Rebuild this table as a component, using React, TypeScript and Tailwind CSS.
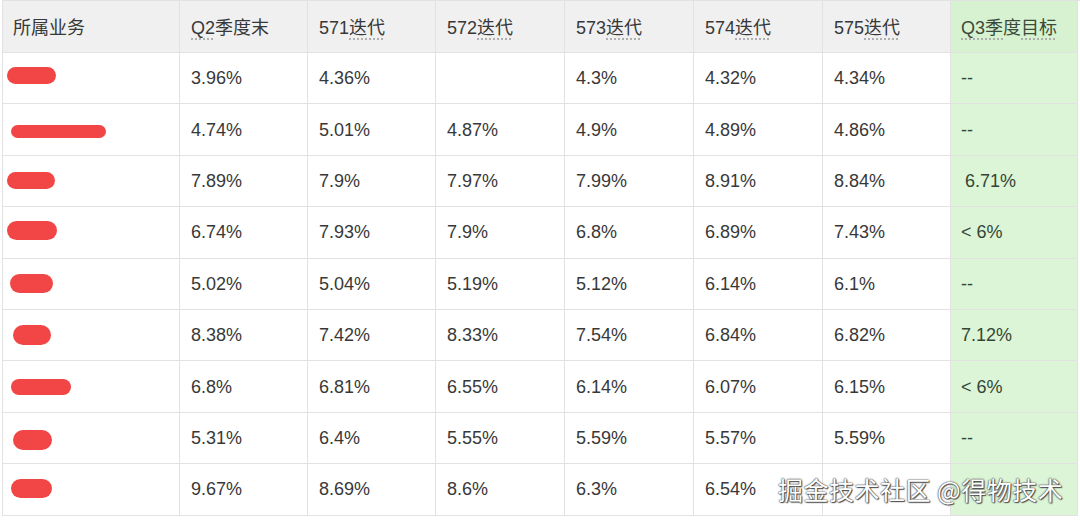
const columns = ["Q2季度末", "571迭代", "572迭代", "573迭代", "574迭代", "575迭代"];

const rows = [
  { pill: "ml-[4px] w-[49px] h-[17px] -translate-y-[3px]", vals: ["3.96%", "4.36%", "", "4.3%", "4.32%", "4.34%"], target: "--" },
  { pill: "ml-[8px] w-[95px] h-[13px] translate-y-[2px]", vals: ["4.74%", "5.01%", "4.87%", "4.9%", "4.89%", "4.86%"], target: "--" },
  { pill: "ml-[4px] w-[48px] h-[17px]", vals: ["7.89%", "7.9%", "7.97%", "7.99%", "8.91%", "8.84%"], target: "6.71%", indent: true },
  { pill: "ml-[4px] w-[50px] h-[19px] -translate-y-[2px]", vals: ["6.74%", "7.93%", "7.9%", "6.8%", "6.89%", "7.43%"], target: "< 6%" },
  { pill: "ml-[7px] w-[43px] h-[19px]", vals: ["5.02%", "5.04%", "5.19%", "5.12%", "6.14%", "6.1%"], target: "--" },
  { pill: "ml-[10px] w-[38px] h-[20px]", vals: ["8.38%", "7.42%", "8.33%", "7.54%", "6.84%", "6.82%"], target: "7.12%" },
  { pill: "ml-[8px] w-[60px] h-[16px]", vals: ["6.8%", "6.81%", "6.55%", "6.14%", "6.07%", "6.15%"], target: "< 6%" },
  { pill: "ml-[10px] w-[39px] h-[20px] translate-y-[2px]", vals: ["5.31%", "6.4%", "5.55%", "5.59%", "5.57%", "5.59%"], target: "--" },
  { pill: "ml-[8px] w-[41px] h-[19px] -translate-y-[1px]", vals: ["9.67%", "8.69%", "8.6%", "6.3%", "6.54%", ""], target: "" },
];

const font = "font-['Liberation_Sans','Noto_Sans_CJK_SC',sans-serif]";
const dotted = "underline decoration-dotted decoration-[#a8a8a8] underline-offset-[5px]";

function HeaderLabel({ label }: { label: string }) {
  // dotted underline sits under the part the editor flagged
  if (label.startsWith("Q2")) {
    return (
      <span>
        <span className={dotted}>Q2</span>季度末
      </span>
    );
  }
  return (
    <span>
      {label.slice(0, 3)}
      <span className={dotted}>{label.slice(3)}</span>
    </span>
  );
}

export default function App() {
  return (
    <div className={`relative h-[520px] w-[1080px] bg-white pl-[2px] text-[18px] text-[#383838] ${font}`}>
      <div className="grid grid-cols-[177px_128px_128px_129px_129px_129px_128px_127px] border-l border-t border-[#e2e2e2]">
        <div className="flex h-[52px] items-center border-b border-r border-[#e2e2e2] bg-[#f0f0f0] pl-[10px] pt-[3px]">
          所属业务
        </div>
        {columns.map((c) => (
          <div
            key={c}
            className="flex h-[52px] items-center border-b border-r border-[#e2e2e2] bg-[#f0f0f0] pl-[11px] pt-[3px]"
          >
            <HeaderLabel label={c} />
          </div>
        ))}
        <div className="flex h-[52px] items-center border-b border-r border-[#e2e2e2] bg-[#d7f2d0] pl-[10px] pt-[3px] text-[#3b4a3b]">
          <span>
            <span className={dotted}>Q3季</span>度<span className={dotted}>目标</span>
          </span>
        </div>

        {rows.map((r, i) => (
          <div key={i} className="contents">
            <div className="flex h-[51.4px] items-center border-b border-r border-[#e2e2e2]">
              <div className={`rounded-full bg-[#f24646] ${r.pill}`} />
            </div>
            {r.vals.map((v, j) => (
              <div
                key={j}
                className="flex h-[51.4px] items-center border-b border-r border-[#e2e2e2] pl-[11px] pt-[1px]"
              >
                {v}
              </div>
            ))}
            <div
              className={`flex h-[51.4px] items-center border-b border-r border-[#e2e2e2] bg-[#dcf5d6] pt-[1px] text-[#354535] ${
                r.indent ? "pl-[14px]" : "pl-[10px]"
              }`}
            >
              {r.target}
            </div>
          </div>
        ))}
      </div>

      <div className="absolute left-[778px] top-[471px] text-[25px] tracking-[0.5px] text-white [text-shadow:0_0_1px_#333,0_0_2px_#444,1px_1px_1px_#555] font-['Noto_Sans_CJK_SC',sans-serif]">
        掘金技术社区 @得物技术
      </div>
    </div>
  );
}
